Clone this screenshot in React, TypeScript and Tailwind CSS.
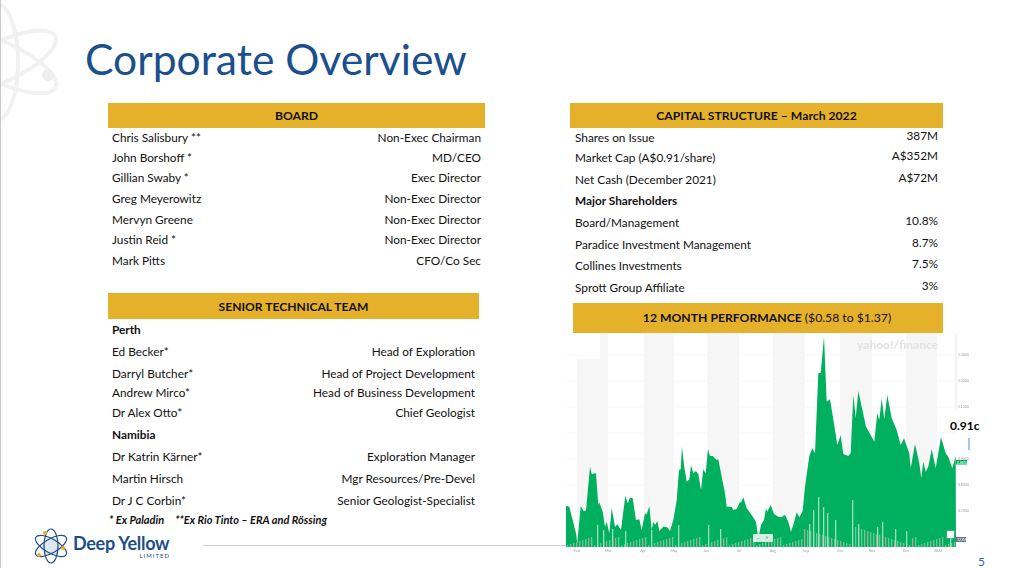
import React from 'react';

const board = [
    ['Chris Salisbury **', 'Non-Exec Chairman', 'h-[20px]'],
    ['John Borshoff *', 'MD/CEO', 'h-[20px]'],
    ['Gillian Swaby *', 'Exec Director', 'h-[20px]'],
    ['Greg Meyerowitz', 'Non-Exec Director', 'h-[21px]'],
    ['Mervyn Greene', 'Non-Exec Director', 'h-[21px]'],
    ['Justin Reid *', 'Non-Exec Director', 'h-[20px]'],
    ['Mark Pitts', 'CFO/Co Sec', 'h-[21px]'],
];

const team = [
    ['Perth', '', 'h-[22px]'],
    ['Ed Becker*', 'Head of Exploration', 'h-[22px]'],
    ['Darryl Butcher*', 'Head of Project Development', 'h-[22px]'],
    ['Andrew Mirco*', 'Head of Business Development', 'h-[16px]'],
    ['Dr Alex Otto*', 'Chief Geologist', 'h-[23px]'],
    ['Namibia', '', 'h-[22px]'],
    ['Dr Katrin Kärner*', 'Exploration Manager', 'h-[22px]'],
    ['Martin Hirsch', 'Mgr Resources/Pre-Devel', 'h-[22px]'],
    ['Dr J C Corbin*', 'Senior Geologist-Specialist', 'h-[22px]'],
];

const capital = [
    ['Shares on Issue', '387M', 'h-[20px]'],
    ['Market Cap (A$0.91/share)', 'A$352M', 'h-[20px]'],
    ['Net Cash (December 2021)', 'A$72M', 'h-[24px]'],
    ['Major Shareholders', '', 'h-[18px]'],
    ['Board/Management', '10.8%', 'h-[26px]'],
    ['Paradice Investment Management', '8.7%', 'h-[18px]'],
    ['Collines Investments', '7.5%', 'h-[24px]'],
    ['Sprott Group Affiliate', '3%', 'h-[20px]'],
];

// traced from the price line, in chart pixels (x from 566, y from 333)
const left = [[18,527],[28,530],[48,610],[52,640],[62,528],[70,542],[78,542],[90,410],[95,432],[108,430],[115,525],[118,517],[128,545],[135,590],[140,575],[148,610],[155,535],[165,590],[172,583],[183,600],[196,497],[203,520],[210,503],[218,505],[228,570],[238,568],[245,600],[255,550],[260,553],[268,528],[275,600],[280,575],[285,585],[292,573],[298,603],[310,590],[322,592],[330,603],[340,570],[350,510],[357,420],[362,418],[366,350],[372,405],[380,455],[388,448],[393,405],[400,430],[408,423],[415,432],[423,480],[430,418],[437,430],[444,357],[450,378],[458,378],[470,390],[475,388],[485,440],[495,490],[500,530],[515,530],[520,540],[530,537],[540,515],[543,518],[550,502],[560,535],[575,555],[588,575],[595,625],[603,585],[612,570],[618,535],[622,545],[632,525],[642,552],[655,560],[665,562],[672,556],[680,565]];
const right = [[0,565],[15,555],[25,575],[33,605],[40,585],[50,547],[58,562],[68,543],[75,470],[88,378],[97,355],[105,370],[115,130],[122,128],[132,20],[140,215],[150,208],[165,300],[172,345],[182,316],[190,372],[205,378],[212,370],[220,195],[227,265],[235,183],[245,230],[258,290],[272,315],[283,335],[292,250],[298,270],[305,205],[313,268],[322,195],[335,265],[350,300],[362,345],[372,325],[388,370],[392,415],[405,342],[418,400],[424,445],[430,395],[437,425],[445,410],[455,358],[467,415],[483,322],[497,370],[505,380],[517,415],[527,378]];

const toLeft = ([x, y]: number[]) => `${(x / 3 - 6).toFixed(1)},${(y / 3 - 3).toFixed(1)}`;
const toRight = ([x, y]: number[]) => `${(x / 3 + 214).toFixed(1)},${(y / 3 - 3).toFixed(1)}`;
const area = `0,214 ${left.map(toLeft).join(' ')} ${right.map(toRight).join(' ')} 390,214`;

const bands = [[11, 31], [78, 30], [141, 32], [207, 32], [274, 32], [340, 31]];
const gridLines = [22, 48, 74, 100, 126, 152, 178];
const months = [['Feb', 11], ['Mar', 42], ['Apr', 77], ['May', 108], ['Jun', 140], ['Jul', 173], ['Aug', 207], ['Sep', 240], ['Oct', 274], ['Nov', 306], ['Dec', 340], ['2022', 372]];
const prices = [['1.3000', 22], ['1.2000', 48], ['1.1000', 74], ['0.9000', 126], ['0.8000', 152], ['0.7000', 178]];

// volume bars along the bottom of the chart
const tall = [[31, 22], [37, 17], [46, 18], [59, 16], [85, 17], [112, 22], [142, 22], [154, 18], [243, 23], [247, 37], [252, 50], [257, 40], [261, 34], [269, 27], [286, 47], [292, 23], [311, 20], [316, 25], [329, 18], [340, 16], [384, 14]];
const bars = Array.from({ length: 130 }, (_, i) => {
    const x = 1 + i * 3;
    const scale = x > 235 && x < 345 ? 19 : 9;
    return { x, h: 2 + ((i * 37) % scale), tan: i % 3 === 1 };
});

const Chart = () => (
    <div className="relative h-[222px] w-[448px]">
        <svg width="448" height="222" className="blur-[0.35px]" aria-hidden="true">
            {bands.map(([x, w]) => (
                <rect key={x} x={x} y="0" width={w} height="214" fill="#f6f6f6" />
            ))}
            <rect x="0" y="0" width="34" height="26" fill="#ffffff" />
            {gridLines.map(y => (
                <line key={y} x1="0" x2="390" y1={y} y2={y} stroke="#f7f7f7" />
            ))}
            <polygon points={area} fill="#00b05f" />
            {bars.map(b => (
                <rect key={b.x} x={b.x} y={214 - b.h} width="1.3" height={b.h} fill={b.tan ? '#a9a98f' : '#62cc98'} />
            ))}
            {tall.map(([x, h]) => (
                <rect key={x} x={x} y={214 - h} width="1.3" height={h} fill="#9adfbd" />
            ))}
            <line x1="390" x2="390" y1="0" y2="78" stroke="#e8e8e8" />
            <text x="291" y="16" fontSize="12" fontWeight="900" fill="#e3e3e3">yahoo!/finance</text>
            {months.map(([m, x]) => (
                <text key={m} x={x} y="219" fontSize="3.6" fill="#9a9a9a" textAnchor="middle">{m}</text>
            ))}
            {prices.map(([p, y]) => (
                <text key={p} x="392" y={Number(y) + 1} fontSize="3.4" fill="#9a9a9a">{p}</text>
            ))}
            <rect x="390" y="127" width="11" height="4.5" fill="#00b05f" />
            <text x="391" y="130.6" fontSize="3.4" fill="#ffffff">0.8800</text>
            <rect x="390" y="204" width="10" height="5" fill="#6b7788" />
            <text x="391" y="207.8" fontSize="3.4" fill="#ffffff">123M</text>
            <rect x="187" y="201" width="20" height="8" rx="1" fill="#d8efe3" />
            <text x="192" y="207" fontSize="6" fill="#7b8a82" textAnchor="middle">−</text>
            <text x="201" y="207" fontSize="6" fill="#7b8a82" textAnchor="middle">+</text>
            <rect x="381" y="198" width="7" height="7" fill="#ffffff" stroke="#c8c8c8" strokeWidth="0.5" />
            <line x1="403" x2="403" y1="105" y2="117" stroke="#4a8fdc" />
        </svg>
        <span className="absolute left-[384px] top-[84px] text-[12px] font-bold text-black">0.91c</span>
    </div>
);

const Logo = () => (
    <svg width="36" height="36" viewBox="0 0 36 36" aria-hidden="true">
        <circle cx="18" cy="18" r="9" fill="#dfe7ef" />
        <g fill="none" stroke="#1f4f86" strokeWidth="1.2">
            <ellipse cx="18" cy="18" rx="7" ry="17" />
            <ellipse cx="18" cy="18" rx="7" ry="17.5" transform="rotate(60 18 18)" />
            <ellipse cx="18" cy="18" rx="7" ry="17.5" transform="rotate(-60 18 18)" />
        </g>
        <circle cx="12" cy="5" r="2" fill="#e8b228" />
        <circle cx="30" cy="20" r="2" fill="#e8b228" />
        <circle cx="6" cy="27" r="2" fill="#e8b228" />
    </svg>
);

const Row = ({ l, r, cls, bold }: { l: string; r: string; cls: string; bold: boolean }) => (
    <div className={`flex items-center justify-between px-[4px] ${cls}`}>
        <span className={bold ? 'font-bold' : ''}>{l}</span>
        <span>{r}</span>
    </div>
);

const App: React.FC = () => {
    return (
        <div className="relative flex h-[568px] w-[1014px] overflow-hidden border-l border-[#c9c9c9] bg-white font-['Lato',sans-serif] text-[11.8px] text-[#111111]">
            {/* faded atom behind the title */}
            <svg className="absolute left-0 top-0" width="70" height="125" aria-hidden="true">
                <g fill="none" stroke="#f1f1f1" strokeWidth="4">
                    <ellipse cx="-4" cy="62" rx="21" ry="58" />
                    <ellipse cx="0" cy="62" rx="60" ry="20" transform="rotate(-25 0 62)" />
                    <ellipse cx="0" cy="62" rx="60" ry="20" transform="rotate(25 0 62)" />
                </g>
                <circle cx="47" cy="75" r="6" fill="#eeeeee" />
            </svg>

            <div className="relative flex w-[565px] shrink-0 flex-col">
                <h1 className="h-[103px] pl-[84px] pt-[34px] text-[42.6px] leading-[50px] text-[#1b4f8e]">Corporate Overview</h1>

                <div className="ml-[107px] w-[377px]">
                    <div className="flex h-[25px] items-center justify-center bg-[#e6b12a] pt-[1px] text-[12.2px] font-bold">BOARD</div>
                    {board.map(([l, r, cls]) => (
                        <Row key={l} l={l} r={r} cls={cls} bold={false} />
                    ))}
                </div>

                <div className="ml-[107px] mt-[22px] w-[371px]">
                    <div className="flex h-[26px] items-center justify-center bg-[#e6b12a] pt-[2px] text-[12.1px] font-bold">SENIOR TECHNICAL TEAM</div>
                    {team.map(([l, r, cls]) => (
                        <Row key={l} l={l} r={r} cls={cls} bold={r === ''} />
                    ))}
                </div>

                <div className="ml-[108px] flex h-[16px] items-center gap-[11px] text-[11px] font-bold italic">
                    <span>* Ex Paladin</span>
                    <span>**Ex Rio Tinto – ERA and Rössing</span>
                </div>

                <div className="ml-[32px] flex items-center">
                    <Logo />
                    <div className="ml-[4px] flex w-[97px] flex-col">
                        <span className="text-[18px] font-bold leading-[20px] tracking-[-0.3px] whitespace-nowrap text-[#1c4f8a]">Deep Yellow</span>
                        <span className="-mt-[1px] text-right text-[6px] leading-[7px] tracking-[1px] text-[#1c4f8a]">LIMITED</span>
                    </div>
                    <div className="ml-[33px] mb-[1px] h-px flex-1 bg-[#cfcfcf]" />
                </div>
            </div>

            <div className="flex flex-1 flex-col pt-[103px]">
                <div className="ml-[4px] w-[373px]">
                    <div className="flex h-[25px] items-center justify-center bg-[#e6b12a] pt-[1px] text-[12.2px] font-bold">CAPITAL STRUCTURE – March 2022</div>
                    {capital.map(([l, r, cls]) => (
                        <div key={l} className={`flex items-center justify-between pl-[5px] pr-[5px] ${cls}`}>
                            <span className={r === '' ? 'font-bold' : ''}>{l}</span>
                            <span className="mb-[5px]">{r}</span>
                        </div>
                    ))}
                </div>
                <div className="ml-[7px] mt-[5px] flex h-[30px] w-[370px] items-center justify-center bg-[#e6b12a] pl-[18px] text-[12.2px]">
                    <span><b>12 MONTH PERFORMANCE</b> ($0.58 to $1.37)</span>
                </div>
                <Chart />
                <div className="h-[13px] pr-[29px] text-right text-[12px] leading-[14px] text-[#2f5ea8]">5</div>
            </div>
        </div>
    );
};

export default App;
